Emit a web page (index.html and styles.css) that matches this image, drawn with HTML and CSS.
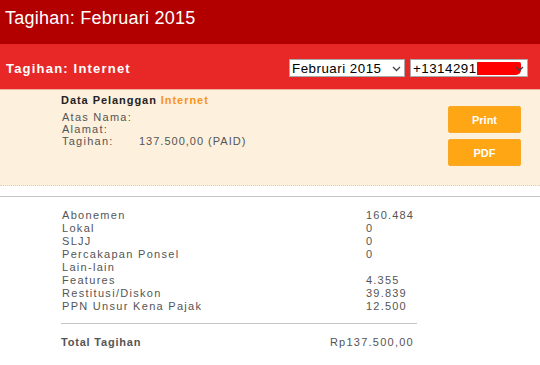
FILE: index.html
```html
<!DOCTYPE html>
<html>
<head>
<meta charset="utf-8">
<link rel="stylesheet" href="styles.css">
</head>
<body>
<div class="top">Tagihan: Februari 2015</div>
<div class="bar">
  <div class="bar-title">Tagihan: Internet</div>
  <div class="selects">
    <div class="sel sel-month"><span>Februari 2015</span><svg class="chev" width="9" height="6" viewBox="0 0 9 6"><path d="M1 1 L4.5 4.5 L8 1" fill="none" stroke="#444" stroke-width="1.3"/></svg></div>
    <div class="sel sel-phone"><span>+1314291</span><span class="redact"></span><svg class="chev" width="9" height="6" viewBox="0 0 9 6"><path d="M1 1 L4.5 4.5 L8 1" fill="none" stroke="#444" stroke-width="1.3"/></svg></div>
  </div>
</div>
<div class="info">
  <div class="cust">
    <div class="cust-title">Data Pelanggan <span class="accent">Internet</span></div>
    <div class="cust-row"><span class="k">Atas Nama:</span></div>
    <div class="cust-row"><span class="k">Alamat:</span></div>
    <div class="cust-row"><span class="k">Tagihan:</span><span class="v">137.500,00 (PAID)</span></div>
  </div>
  <div class="buttons">
    <div class="btn">Print</div>
    <div class="btn">PDF</div>
  </div>
</div>
<div class="divider"></div>
<div class="detail">
  <div class="row"><span class="lbl">Abonemen</span><span class="val">160.484</span></div>
  <div class="row"><span class="lbl">Lokal</span><span class="val">0</span></div>
  <div class="row"><span class="lbl">SLJJ</span><span class="val">0</span></div>
  <div class="row"><span class="lbl">Percakapan Ponsel</span><span class="val">0</span></div>
  <div class="row"><span class="lbl">Lain-lain</span><span class="val"></span></div>
  <div class="row"><span class="lbl">Features</span><span class="val">4.355</span></div>
  <div class="row"><span class="lbl">Restitusi/Diskon</span><span class="val">39.839</span></div>
  <div class="row"><span class="lbl">PPN Unsur Kena Pajak</span><span class="val">12.500</span></div>
  <div class="total"><span class="tlbl">Total Tagihan</span><span class="tval">Rp137.500,00</span></div>
</div>
</body>
</html>
```
FILE: styles.css
```css
html, body {
  margin: 0;
  padding: 0;
  background: #fff;
  font-family: "Liberation Sans", Arial, sans-serif;
}
.top {
  height: 44px;
  box-sizing: border-box;
  background: #b20000;
  color: #fff;
  font-size: 18px;
  letter-spacing: 0.25px;
  line-height: 22px;
  padding: 7px 0 0 5px;
}
.bar {
  height: 46px;
  box-sizing: border-box;
  background: #e82727;
  border-bottom: 1px solid #f0b0a0;
  display: flex;
  align-items: center;
  justify-content: space-between;
  padding: 3px 12px 0 6px;
}
.bar-title {
  color: #fff;
  font-weight: bold;
  font-size: 13px;
  letter-spacing: 1.2px;
}
.selects {
  display: flex;
  gap: 5px;
}
.sel {
  height: 18px;
  box-sizing: border-box;
  background: #fff;
  border: 1px solid #a9a9a9;
  display: flex;
  align-items: center;
  font-size: 13.33px;
  letter-spacing: 0.5px;
  color: #000;
  padding-left: 2px;
  position: relative;
}
.sel-month { width: 116px; }
.sel-phone { width: 118px; }
.sel .chev {
  position: absolute;
  right: 3px;
  top: 6px;
}
.redact {
  display: inline-block;
  width: 44px;
  height: 13px;
  background: #ff0000;
  border-radius: 0 2px 5px 0;
}
.info {
  background: #fdf0dc;
  border-bottom: 1px dotted #d8d0c4;
  height: 96px;
  box-sizing: border-box;
  display: flex;
  justify-content: space-between;
  padding: 4px 19px 0 61px;
}
.cust-title {
  font-size: 11px;
  font-weight: bold;
  color: #222;
  letter-spacing: 0.95px;
  line-height: 13px;
  margin-bottom: 4px;
}
.accent { color: #f7941d; }
.cust-row {
  font-size: 11px;
  color: #555;
  letter-spacing: 1.25px;
  line-height: 12px;
  padding-left: 1px;
  display: flex;
}
.cust-row .k { width: 77px; }
.cust-row .v { letter-spacing: 1px; }
.buttons {
  display: flex;
  flex-direction: column;
  gap: 6px;
  padding-top: 12px;
}
.btn {
  width: 73px;
  height: 27px;
  box-sizing: border-box;
  background: #ffa615;
  border: 1px solid #f8a826;
  border-radius: 2px;
  color: #fff;
  font-weight: bold;
  font-size: 11px;
  display: flex;
  align-items: center;
  justify-content: center;
}
.divider {
  height: 1px;
  background: #c4c4c4;
  margin-top: 10px;
}
.detail {
  padding: 12px 0 0 62px;
  width: 417px;
  box-sizing: border-box;
}
.row {
  display: flex;
  font-size: 11px;
  color: #555;
  letter-spacing: 1.3px;
  line-height: 13px;
}
.row .lbl { width: 304px; }
.row .val { letter-spacing: 1.2px; }
.total {
  margin-top: 10px;
  margin-left: -1px;
  border-top: 1px solid #c4c4c4;
  padding-top: 12px;
  display: flex;
  justify-content: space-between;
  font-size: 11px;
  color: #555;
  padding-right: 3px;
}
.tlbl { font-weight: bold; letter-spacing: 0.8px; }
.tval { letter-spacing: 1.25px; }
```
